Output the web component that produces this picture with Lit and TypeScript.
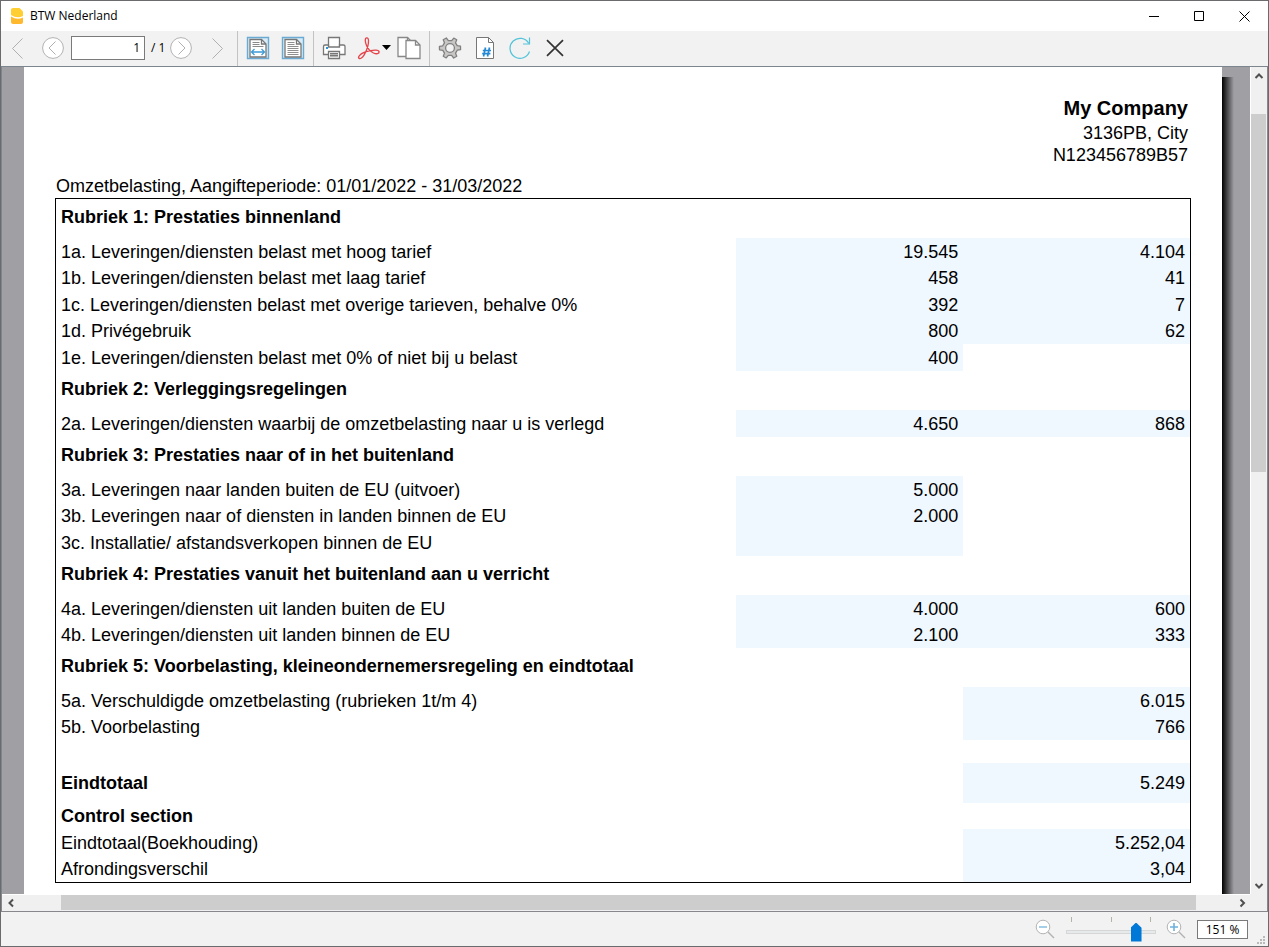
import { LitElement, html, css, svg, nothing } from "lit";
import { customElement, property, state } from "lit/decorators.js";
import { classMap } from "lit/directives/class-map.js";
import { styleMap } from "lit/directives/style-map.js";

type Row = { label: string; base?: string; tax?: string; baseBox?: boolean; taxBox?: boolean };
type Section = { title: string; rows: Row[] };

const both = (label: string, base: string, tax: string): Row => ({ label, base, tax, baseBox: true, taxBox: true });
const baseOnly = (label: string, base = ""): Row => ({ label, base, baseBox: true });
const taxOnly = (label: string, tax: string): Row => ({ label, tax, taxBox: true });

const sections: Section[] = [
  {
    title: "Rubriek 1: Prestaties binnenland",
    rows: [
      both("1a. Leveringen/diensten belast met hoog tarief", "19.545", "4.104"),
      both("1b. Leveringen/diensten belast met laag tarief", "458", "41"),
      both("1c. Leveringen/diensten belast met overige tarieven, behalve 0%", "392", "7"),
      both("1d. Privégebruik", "800", "62"),
      baseOnly("1e. Leveringen/diensten belast met 0% of niet bij u belast", "400"),
    ],
  },
  {
    title: "Rubriek 2: Verleggingsregelingen",
    rows: [both("2a. Leveringen/diensten waarbij de omzetbelasting naar u is verlegd", "4.650", "868")],
  },
  {
    title: "Rubriek 3: Prestaties naar of in het buitenland",
    rows: [
      baseOnly("3a. Leveringen naar landen buiten de EU (uitvoer)", "5.000"),
      baseOnly("3b. Leveringen naar of diensten in landen binnen de EU", "2.000"),
      baseOnly("3c. Installatie/ afstandsverkopen binnen de EU"),
    ],
  },
  {
    title: "Rubriek 4: Prestaties vanuit het buitenland aan u verricht",
    rows: [
      both("4a. Leveringen/diensten uit landen buiten de EU", "4.000", "600"),
      both("4b. Leveringen/diensten uit landen binnen de EU", "2.100", "333"),
    ],
  },
  {
    title: "Rubriek 5: Voorbelasting, kleineondernemersregeling en eindtotaal",
    rows: [
      taxOnly("5a. Verschuldigde omzetbelasting (rubrieken 1t/m 4)", "6.015"),
      taxOnly("5b. Voorbelasting", "766"),
    ],
  },
];

const controlRows: Row[] = [
  taxOnly("Eindtotaal(Boekhouding)", "5.252,04"),
  taxOnly("Afrondingsverschil", "3,04"),
];

const sheet = svg`
  <path d="M4 3.500h11.500l4.500 4.500v13H4z" fill="#fff" stroke="#777" stroke-width="1.300"/>
  <path d="M15.500 3.500v4.500h4.500" fill="none" stroke="#777" stroke-width="1.300"/>`;

const icons = {
  first: svg`<path d="M17.500 2.500L7.500 12.500l10 10" fill="none" stroke="#b0b0b0"/>`,
  last: svg`<path d="M7.500 2.500l10 10-10 10" fill="none" stroke="#b0b0b0"/>`,
  prev: svg`<circle cx="12" cy="12" r="10.400" fill="#fff" stroke="#b3b3b3"/><path d="M14.500 5.500L8 12l6.500 6.500" fill="none" stroke="#b0b0b0"/>`,
  next: svg`<circle cx="12" cy="12" r="10.400" fill="#fff" stroke="#b3b3b3"/><path d="M9.500 5.500L16 12l-6.500 6.500" fill="none" stroke="#b0b0b0"/>`,
  fitWidth: svg`<path d="M1.500 1.500h21v21h-21z" fill="#d8ebf7" stroke="#6aaad3" stroke-width="1.400"/>${sheet}
    <path d="M6.500 6.500h7M6.500 8.500h7M6.500 10.500h11" stroke="#8a8a8a"/>
    <path d="M5.500 16h13M8.500 13l-3 3 3 3M15.500 13l3 3-3 3" fill="none" stroke="#3d9bd6" stroke-width="1.300"/>`,
  fitPage: svg`<path d="M1.500 1.500h21v21h-21z" fill="#d8ebf7" stroke="#6aaad3" stroke-width="1.400"/>${sheet}
    <path d="M6.500 6.500h7M6.500 8.500h7M6.500 10.500h11M6.500 12.500h11M6.500 14.500h11M6.500 16.500h11M6.500 18.500h11" stroke="#8f8f8f"/>`,
  print: svg`<path d="M6.500 11V1.500h11V11" fill="#fff" stroke="#777" stroke-width="1.300"/>
    <path d="M1.500 10.500q0-1.500 1.500-1.500h3.500v2h11v-2H21.500q1.500 0 1.500 1.500v8h-21.500z" fill="#fff" stroke="#777" stroke-width="1.300"/>
    <path d="M6.500 15.500h11v7h-11z" fill="#fff" stroke="#777" stroke-width="1.300"/>
    <path d="M8 17h8v4H8z" fill="#b5b5b5"/><path d="M8 17.500h8M8 19.500h8" stroke="#777"/>
    <path d="M4 11h2v2H4z" fill="#2b93d8"/>`,
  pdf: svg`<path d="M9.500 9.500C8.300 6.500 7.400 2 9.700 1.800c2.400-.2 2 4.600 1.200 8M9.500 9.500c1.200 3 4 6 7 7.500 3 1.400 5.800.8 5.600-1.200-.3-2.200-5.400-1.900-8.600-1.100M10.900 9.800c-.9 3.400-2 6.200-3.700 9-1.700 2.700-4 4.600-5.200 3.500-1.600-1.500 1.500-4 4-5.400 2.200-1.200 5-1.800 7.500-2.200" fill="none" stroke="#e4444a" stroke-width="1.300"/>`,
  copy: svg`<path d="M1 1.500h9.500l4 4V20.500H1z" fill="#fff" stroke="#888" stroke-width="1.300"/><path d="M10.500 1.500v4h4" fill="none" stroke="#888" stroke-width="1.300"/>
    <path d="M9 4.500h9.500l4.500 4.500v13.500H9z" fill="#fff" stroke="#888" stroke-width="1.300"/><path d="M18.500 4.500V9h4.500" fill="none" stroke="#888" stroke-width="1.300"/>`,
  gear: svg`<g transform="rotate(30 12 12)"><path d="M9.800 4.800L10.300 1.500h3.400l.5 3.300 2.900 1.600 3.100-1.200 1.800 3-2.600 2.100v3.400l2.600 2.100-1.800 3-3.100-1.200-2.900 1.600-.5 3.300h-3.400l-.5-3.300-2.900-1.600-3.100 1.200-1.800-3 2.600-2.100v-3.400L2 8.200l1.800-3 3.100 1.200z" fill="#c9c7c5" stroke="#808080" stroke-width="1.300" stroke-linejoin="round"/></g>
    <circle cx="12" cy="12" r="4.400" fill="#f3f3f3" stroke="#808080" stroke-width="1.300"/>`,
  pageNumber: svg`<path d="M3.500 1.500h12l5 5v16h-17z" fill="#fff" stroke="#777"/><path d="M15.500 1.500v5h5" fill="none" stroke="#777"/>
    <path d="M12.500 11.500l-2 9M16.500 11.500l-2 9M9.800 14.500h8.200M9.200 17.700h8.200" stroke="#2389d4" stroke-width="1.700"/>`,
  refresh: svg`<path d="M20.800 7.500A10 10 0 1 0 21.500 15.500" fill="none" stroke="#52c3d8" stroke-width="1.200"/><path d="M21.500 1.500v6.500h-6.500" fill="none" stroke="#52c3d8" stroke-width="1.200"/>`,
  close: svg`<path d="M4 4.200l16 15.600M20 4.200L4 19.800" stroke="#333" stroke-width="1.700"/>`,
  minus: svg`<circle cx="10" cy="10" r="6.800" fill="#fff" stroke="#b3b3b3"/><path d="M15 15l6 6" stroke="#b3b3b3" stroke-width="1.400"/><path d="M6 10h8" stroke="#8fc3e4" stroke-width="1.600"/>`,
  plus: svg`<circle cx="10" cy="10" r="6.800" fill="#fff" stroke="#b3b3b3"/><path d="M15 15l6 6" stroke="#b3b3b3" stroke-width="1.400"/><path d="M6 10h8M10 6v8" stroke="#6fb2dc" stroke-width="1.600"/>`,
};

const icon = (shape: unknown) => html`<svg width="24" height="24" viewBox="0 0 24 24" aria-hidden="true">${shape}</svg>`;

@customElement("scroll-track")
export class ScrollTrack extends LitElement {
  @property({ type: Boolean, reflect: true }) vertical = false;
  @property({ type: Number }) before = 0;
  @property({ type: Number }) size = 1;
  @property({ type: Number }) after = 0;

  static styles = css`
    :host { display: flex; background: #f0f0f0; height: 16px; border-top: 1px solid #fff; }
    :host([vertical]) { flex-direction: column; width: 16px; height: auto; border-top: 0; border-left: 1px solid #fff; }
    .arrow { flex: none; display: block; width: 17px; height: 16px; padding: 0; border: 0; background: none; }
    :host([vertical]) .arrow { width: 16px; height: 17px; }
    .arrow svg { display: block; margin: auto; }
    .thumb { background: #cdcdcd; margin-bottom: 1px; }
    :host([vertical]) .thumb { margin: 0 1px 0 0; }
  `;

  render() {
    const back = this.vertical ? "M1.500 7L5 3.500 8.500 7" : "M7 1.500L3.500 5 7 8.500";
    const forward = this.vertical ? "M1.500 3L5 6.500 8.500 3" : "M3.500 1.500L7 5 3.500 8.500";
    const arrow = (label: string, d: string) => html`
      <button class="arrow" aria-label=${label}>
        <svg width="10" height="10" viewBox="0 0 10 10"><path d=${d} fill="none" stroke="#505050" stroke-width="2"/></svg>
      </button>`;
    return html`
      ${arrow("Scroll back", back)}
      <div style=${styleMap({ flexGrow: String(this.before) })}></div>
      <div class="thumb" style=${styleMap({ flexGrow: String(this.size) })}></div>
      <div style=${styleMap({ flexGrow: String(this.after) })}></div>
      ${arrow("Scroll forward", forward)}
    `;
  }
}

@customElement("vat-report")
export class VatReport extends LitElement {
  static styles = css`
    :host { display: block; background: #fff; color: #000; padding: 29px 31px 12px; font: 18px/22px "Liberation Sans", Arial, sans-serif; }
    .company { text-align: right; padding-right: 3px; }
    .name { margin: 0 0 1px; font-size: 20px; line-height: 25px; }
    .line { margin: 0; }
    .period { margin: 8px 0 0; padding-left: 1px; line-height: 24px; }
    .report { width: 100%; table-layout: fixed; border: 1px solid #000; border-spacing: 0; border-collapse: separate; }
    .label { width: 60%; }
    .amount { width: 20%; }
    td, th { padding: 0 5px; text-align: left; font-weight: 400; white-space: nowrap; }
    .heading { box-sizing: border-box; height: 39px; padding-bottom: 3px; font-weight: 700; }
    .row { height: 26px; }
    .row:nth-of-type(even) { height: 27px; }
    .control .heading { height: 26px; padding-bottom: 0; }
    .space { height: 23px; }
    .total { height: 40px; }
    .total th { font-weight: 700; }
    .value { text-align: right; }
    .base { padding-right: 5px; }
    .box { background: #eff7ff; }
  `;

  private row(r: Row, kind = "row") {
    return html`<tr class=${kind}>
      <th scope="row">${r.label}</th>
      <td class=${classMap({ value: true, base: true, box: !!r.baseBox })}>${r.base ?? nothing}</td>
      <td class=${classMap({ value: true, box: !!r.taxBox })}>${r.tax ?? nothing}</td>
    </tr>`;
  }

  render() {
    return html`
      <header class="company">
        <h1 class="name">My Company</h1>
        <p class="line">3136PB, City</p>
        <p class="line">N123456789B57</p>
      </header>
      <p class="period" id="period">Omzetbelasting, Aangifteperiode: 01/01/2022 - 31/03/2022</p>
      <table class="report" aria-labelledby="period">
        <colgroup><col class="label" /><col class="amount" /><col class="amount" /></colgroup>
        ${sections.map((s) => html`<tbody>
          <tr><th class="heading" colspan="3" scope="rowgroup">${s.title}</th></tr>
          ${s.rows.map((r) => this.row(r))}
        </tbody>`)}
        <tbody>
          <tr><td class="space" colspan="3"></td></tr>
          ${this.row(taxOnly("Eindtotaal", "5.249"), "total")}
        </tbody>
        <tbody class="control">
          <tr><th class="heading" colspan="3" scope="rowgroup">Control section</th></tr>
          ${controlRows.map((r) => this.row(r))}
        </tbody>
      </table>
    `;
  }
}

@customElement("app-root")
export class AppRoot extends LitElement {
  @state() private zoom = 151;

  static styles = css`
    :host { display: flex; flex-direction: column; box-sizing: border-box; height: 100vh; overflow: hidden; border: 1px solid #6b6b6e; background: #f2f2f2; color: #000; font: 12px/16px "Segoe UI", "Open Sans", "Noto Sans", sans-serif; }
    button { padding: 0; border: 0; background: none; color: inherit; font: inherit; }
    button svg, .logo { display: block; }
    .titlebar { flex: none; display: flex; align-items: center; height: 30px; padding: 0 1px 0 8px; background: #fff; }
    .title { flex: 1; margin: 0 0 0 5px; font-size: 12px; font-weight: 400; }
    .caption { width: 45px; height: 30px; display: grid; place-items: center; }
    .toolbar { flex: none; display: flex; height: 35px; border-bottom: 1px solid #7d858f; }
    .group { display: flex; align-items: center; gap: 11px; padding: 0 8px 2px; border-right: 1px solid #c3c3c3; }
    .group:last-child { border-right: 0; }
    .pager { gap: 6px; padding-left: 4px; }
    .far-left { margin-right: 6px; }
    .far-right { margin-left: 6px; }
    .page-input { box-sizing: border-box; width: 74px; height: 24px; margin: 0; padding: 0 4px; border: 1px solid #7a7a7a; background: #fff; font: inherit; text-align: right; }
    .count { width: 12px; white-space: nowrap; }
    .output { gap: 6px; }
    .pdf { display: flex; align-items: center; gap: 1px; padding-left: 5px; }
    .body { flex: 1; min-height: 0; display: flex; background: #a09fa4; border-left: 1px solid #7d858f; border-right: 1px solid #88888c; }
    .stage { flex: 1; min-width: 0; display: flex; padding: 0 16px 0 22px; overflow: hidden; }
    .sheet { flex: 1; min-width: 0; }
    .shadow { flex: none; width: 12px; margin-top: 10px; background: linear-gradient(90deg, #000, #a09fa4); }
    .across { flex: none; display: flex; background: #f0f0f0; border: solid #88888c; border-width: 0 1px 1px; }
    .across scroll-track { flex: 1; }
    .corner { width: 17px; }
    .status { flex: none; display: flex; justify-content: flex-end; align-items: center; height: 34px; }
    .slider { display: flex; flex-direction: column; width: 90px; margin: 0 8px 0 9px; }
    .ticks { display: flex; justify-content: space-between; height: 5px; padding: 0 5px; }
    .tick { width: 1px; background: #b5b2a6; }
    .range { -webkit-appearance: none; appearance: none; display: block; width: 90px; height: 20px; margin: 0; background: none; }
    .range::-webkit-slider-runnable-track { height: 4px; box-sizing: border-box; background: #e7eaea; border: 1px solid #d6d6d6; }
    .range::-webkit-slider-thumb { -webkit-appearance: none; width: 11px; height: 19px; margin-top: -8px; border: 0; background: #0078d7; clip-path: polygon(50% 0, 100% 27%, 100% 100%, 0 100%, 0 27%); }
    .zoom-value { box-sizing: border-box; width: 51px; height: 19px; margin: 0 9px; padding: 0; border: 1px solid #7a7a7a; background: #fff; font: inherit; text-align: center; }
    .grip { align-self: flex-end; margin: 0 1px 0 0; }
  `;

  private button(label: string, shape: unknown, cls = "tool") {
    return html`<button class=${cls} aria-label=${label} title=${label}>${icon(shape)}</button>`;
  }

  private onZoom(e: Event) {
    this.zoom = Number((e.target as HTMLInputElement).value);
  }

  render() {
    return html`
      <header class="titlebar">
        <svg class="logo" width="16" height="18" viewBox="0 0 16 18" aria-hidden="true">
          <path d="M2 3q0-2 2-2h6.500L14 4.500V9q-6 3-12-1z" fill="#ffce32"/>
          <path d="M2 9.500q6 4 12 1V15q0 2-2 2H4q-2 0-2-2z" fill="#ffb92e"/>
        </svg>
        <h1 class="title">BTW Nederland</h1>
        <button class="caption" aria-label="Minimize"><svg width="11" height="11"><path d="M0 5.500h10" stroke="#000"/></svg></button>
        <button class="caption" aria-label="Maximize"><svg width="11" height="11"><path d="M.500.500h9v9h-9z" fill="none" stroke="#000"/></svg></button>
        <button class="caption" aria-label="Close"><svg width="11" height="11"><path d="M.500.500l10 10M10.500.500l-10 10" stroke="#000"/></svg></button>
      </header>
      <nav class="toolbar" aria-label="Preview">
        <div class="group pager">
          ${this.button("First page", icons.first, "far-left")}
          ${this.button("Previous page", icons.prev)}
          <input class="page-input" id="page" aria-label="Page" value="1" />
          <label class="count" for="page">/ 1</label>
          ${this.button("Next page", icons.next)}
          ${this.button("Last page", icons.last, "far-right")}
        </div>
        <div class="group">
          ${this.button("Fit width", icons.fitWidth)}
          ${this.button("Fit page", icons.fitPage)}
        </div>
        <div class="group output">
          ${this.button("Print", icons.print)}
          <button class="pdf" aria-label="Export to PDF">
            ${icon(icons.pdf)}
            <svg width="9" height="5" aria-hidden="true"><path d="M0 0h9L4.500 5z" fill="#000"/></svg>
          </button>
          ${this.button("Copy", icons.copy)}
        </div>
        <div class="group">
          ${this.button("Settings", icons.gear)}
          ${this.button("Page numbers", icons.pageNumber)}
          ${this.button("Refresh", icons.refresh)}
          ${this.button("Close preview", icons.close)}
        </div>
      </nav>
      <main class="body">
        <div class="stage">
          <vat-report class="sheet"></vat-report>
          <div class="shadow"></div>
        </div>
        <scroll-track vertical .before=${30} .size=${358} .after=${405}></scroll-track>
      </main>
      <div class="across">
        <scroll-track .before=${42} .size=${1135} .after=${37}></scroll-track>
        <div class="corner"></div>
      </div>
      <footer class="status">
        ${this.button("Zoom out", icons.minus)}
        <div class="slider">
          <div class="ticks"><span class="tick"></span><span class="tick"></span><span class="tick"></span></div>
          <input class="range" type="range" aria-label="Zoom" min="0" max="183" .value=${String(this.zoom)} @input=${this.onZoom} />
        </div>
        ${this.button("Zoom in", icons.plus)}
        <input class="zoom-value" aria-label="Zoom level" .value=${`${this.zoom} %`} />
        <svg class="grip" width="10" height="10" aria-hidden="true"><path d="M6 0h2v2H6zM3 3h2v2H3zM6 3h2v2H6zM0 6h2v2H0zM3 6h2v2H3zM6 6h2v2H6z" fill="#b9b9b9"/></svg>
      </footer>
    `;
  }
}
